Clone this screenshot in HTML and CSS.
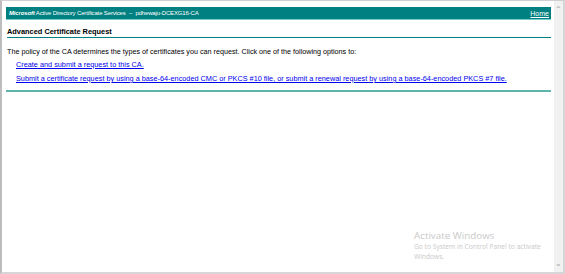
FILE: index.html
```html
<!DOCTYPE html>
<html lang="en">
<head>
    <meta charset="UTF-8">
    <title>Microsoft Active Directory Certificate Services</title>
    <link rel="stylesheet" href="styles.css">
</head>
<body>
    <div class="window">
        <div class="page">
            <div class="banner">
                <span><b><i>Microsoft</i></b> Active Directory Certificate Services &nbsp;--&nbsp; pdhewaju-DCEXG16-CA</span>
                <a href="#" class="home">Home</a>
            </div>
            <h1 class="title">Advanced Certificate Request</h1>
            <p class="intro">The policy of the CA determines the types of certificates you can request. Click one of the following options to:</p>
            <ul class="options">
                <li><a href="#">Create and submit a request to this CA.</a></li>
                <li><a href="#">Submit a certificate request by using a base-64-encoded CMC or PKCS #10 file, or submit a renewal request by using a base-64-encoded PKCS #7 file.</a></li>
            </ul>
            <div class="rule"></div>

            <!-- watermark -->
            <div class="activate">
                <div class="act-title">Activate Windows</div>
                <div class="act-sub">Go to System in Control Panel to activate<br>Windows.</div>
            </div>
        </div>
        <div class="scrollbar">
            <span class="arrow">&#8963;</span>
            <span class="arrow">&#8964;</span>
        </div>
    </div>
</body>
</html>
```

FILE: styles.css
```css
html, body { margin: 0; height: 100%; }
body { font-family: "Liberation Sans", Arial, sans-serif; background: #fff; }
.window { display: flex; height: 274px; box-sizing: border-box; border: 1px solid #cfcfcf; border-left: 2px solid #bdbdbd; border-bottom: 2px solid #d6d6d6; border-right: 2px solid #d6d6d6; }
.page { flex: 1; position: relative; padding: 6px 3px 0 4px; }
.banner { display: flex; justify-content: space-between; align-items: center; background: #008080; color: #fff; font-size: 6px; letter-spacing: -0.15px; height: 12px; padding: 0 2px 0 3px; border-bottom: 1px solid #7cc; }
.banner .home { color: #fff; font-size: 7px; letter-spacing: 0; }
.title { font-size: 7.4px; font-weight: bold; margin: 7px 0 0 1px; padding-bottom: 1px; border-bottom: 1px solid #008080; }
.intro { font-size: 7.2px; margin: 9px 0 0 1px; }
.options { list-style: none; margin: 4px 0 0 0; padding: 0 0 0 10px; font-size: 7.3px; }
.options li { margin-bottom: 5px; }
.options a { color: #0000ee; }
.rule { height: 2px; background: #5fb3ae; margin-top: 7px; }
.activate { position: absolute; left: 412px; top: 228px; color: #c9c9c9; font-family: "Open Sans", sans-serif; white-space: nowrap; }
.act-title { font-size: 9.8px; line-height: 13px; }
.act-sub { font-size: 6.7px; line-height: 9.5px; }
.scrollbar { width: 9px; background: #f1f1f1; display: flex; flex-direction: column; justify-content: space-between; align-items: center; color: #a0a0a0; font-size: 8px; padding: 4px 0; }
```
